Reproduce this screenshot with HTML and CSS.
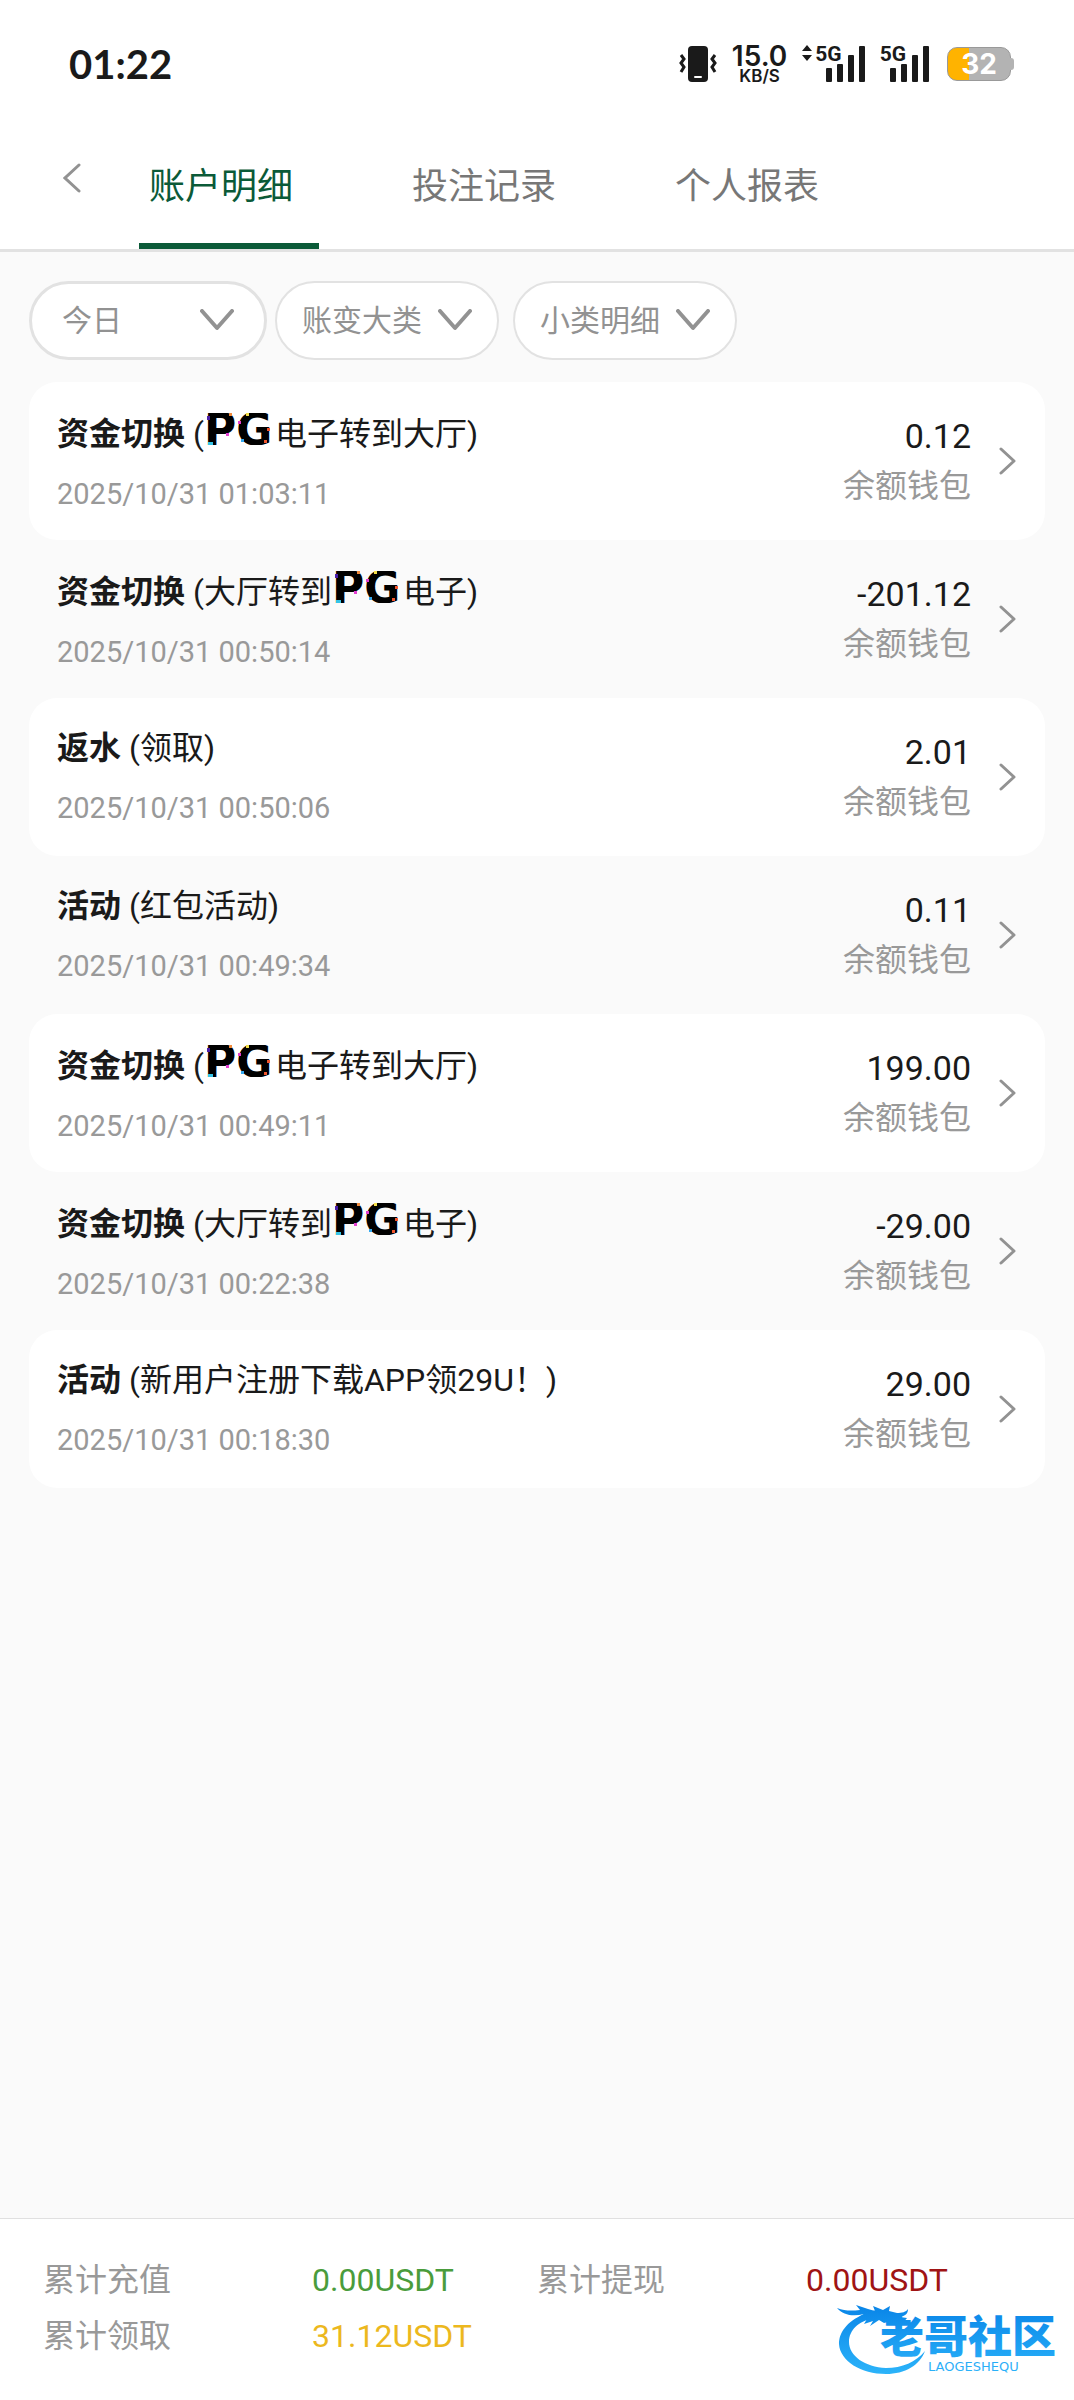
FILE: index.html
```html
<!DOCTYPE html>
<html lang="zh-CN">
<head>
    <meta charset="UTF-8">
    <meta name="viewport" content="width=device-width, initial-scale=1.0">
    <title>账户明细</title>
    <link rel="stylesheet" href="styles.css">
</head>
<body>
    <!-- shared shapes -->
    <svg class="defs" width="0" height="0" aria-hidden="true">
        <symbol id="chevron-down" viewBox="0 0 34 22">
            <path d="M2 2 L17 19 L32 2" fill="none" stroke="#929292" stroke-width="4" stroke-linecap="round" stroke-linejoin="round"/>
        </symbol>
        <symbol id="chevron-right" viewBox="0 0 18 28">
            <path d="M2 2 L15 14 L2 26" fill="none" stroke="#929292" stroke-width="3" stroke-linecap="round" stroke-linejoin="round"/>
        </symbol>
        <symbol id="pg" viewBox="0 0 64 32">
            <text class="pg-text" x="-3" y="32">PG</text>
            <path fill="#4b1fa8" d="M0 3h3v4h-3z"/>
            <path fill="#f08a3c" d="M22 0h3v3h-3z"/>
            <path fill="#35c4e8" d="M1 29h5v3h-5z"/>
            <path fill="#e23fd0" d="M19 20h3v3h-3z"/>
            <path fill="#f5e04a" d="M39 0h3v3h-3z"/>
            <path fill="#e23fd0" d="M31 8h3v3h-3z"/>
            <path fill="#35a9ee" d="M34 26h3v3h-3z"/>
            <path fill="#f0562e" d="M60 15h3v3h-3zM57 27h3v3h-3z"/>
        </symbol>
        <symbol id="signal" viewBox="0 0 40 38">
            <g fill="#1a1a1a">
                <rect x="1" y="23" width="6" height="14" rx="1"/>
                <rect x="12" y="19" width="6" height="18" rx="1"/>
                <rect x="23" y="10" width="6" height="27" rx="1"/>
                <rect x="34" y="1" width="6" height="36" rx="1"/>
            </g>
        </symbol>
    </svg>

    <div class="status-bar">
        <span class="clock">01:22</span>
        <div class="status-icons">
            <svg class="vibrate" width="38" height="38" viewBox="0 0 38 38" aria-hidden="true">
                <rect x="9" y="1" width="20" height="36" rx="4" fill="#1a1a1a"/>
                <rect x="15" y="31" width="8" height="2" rx="1" fill="#fff"/>
                <path d="M2 10 L5 14 L2 18 L5 22 L2 27 M36 10 L33 14 L36 18 L33 22 L36 27" fill="none" stroke="#1a1a1a" stroke-width="3"/>
            </svg>
            <div class="speed"><b>15.0</b><span>KB/S</span></div>
            <div class="network">
                <svg class="arrows" width="10" height="16" viewBox="0 0 10 16" aria-hidden="true">
                    <path d="M5 0 L10 6 H0z M5 16 L10 10 H0z" fill="#1a1a1a"/>
                </svg>
                <span class="net-type">5G</span>
                <svg class="bars" width="40" height="38" aria-hidden="true"><use href="#signal"/></svg>
            </div>
            <div class="network">
                <span class="net-type">5G</span>
                <svg class="bars" width="40" height="38" aria-hidden="true"><use href="#signal"/></svg>
            </div>
            <div class="battery">32</div>
        </div>
    </div>

    <nav class="tabs">
        <button class="back" aria-label="返回">
            <svg width="18" height="30" viewBox="0 0 18 30"><path d="M16 2 L2 15 L16 28" fill="none" stroke="#929292" stroke-width="3" stroke-linecap="round"/></svg>
        </button>
        <a class="tab active" href="#">账户明细</a>
        <a class="tab" href="#">投注记录</a>
        <a class="tab" href="#">个人报表</a>
    </nav>

    <main>
        <div class="filters">
            <div class="filter filter-date">
                <select aria-label="日期"><option>今日</option></select>
                <svg class="arrow" width="34" height="22" aria-hidden="true"><use href="#chevron-down"/></svg>
            </div>
            <div class="filter">
                <select aria-label="账变大类"><option>账变大类</option></select>
                <svg class="arrow" width="34" height="22" aria-hidden="true"><use href="#chevron-down"/></svg>
            </div>
            <div class="filter">
                <select aria-label="小类明细"><option>小类明细</option></select>
                <svg class="arrow" width="34" height="22" aria-hidden="true"><use href="#chevron-down"/></svg>
            </div>
        </div>

        <div class="records">
            <a class="record" href="#">
                <div class="info">
                    <div class="title"><b>资金切换</b> (<svg class="pg" width="64" height="32"><use href="#pg"/></svg>电子转到大厅)</div>
                    <div class="date">2025/10/31 01:03:11</div>
                </div>
                <div class="money">
                    <div class="amount">0.12</div>
                    <div class="wallet">余额钱包</div>
                </div>
                <svg width="18" height="28" aria-hidden="true"><use href="#chevron-right"/></svg>
            </a>
            <a class="record" href="#">
                <div class="info">
                    <div class="title"><b>资金切换</b> (大厅转到<svg class="pg" width="64" height="32"><use href="#pg"/></svg>电子)</div>
                    <div class="date">2025/10/31 00:50:14</div>
                </div>
                <div class="money">
                    <div class="amount">-201.12</div>
                    <div class="wallet">余额钱包</div>
                </div>
                <svg width="18" height="28" aria-hidden="true"><use href="#chevron-right"/></svg>
            </a>
            <a class="record" href="#">
                <div class="info">
                    <div class="title"><b>返水</b> (领取)</div>
                    <div class="date">2025/10/31 00:50:06</div>
                </div>
                <div class="money">
                    <div class="amount">2.01</div>
                    <div class="wallet">余额钱包</div>
                </div>
                <svg width="18" height="28" aria-hidden="true"><use href="#chevron-right"/></svg>
            </a>
            <a class="record" href="#">
                <div class="info">
                    <div class="title"><b>活动</b> (红包活动)</div>
                    <div class="date">2025/10/31 00:49:34</div>
                </div>
                <div class="money">
                    <div class="amount">0.11</div>
                    <div class="wallet">余额钱包</div>
                </div>
                <svg width="18" height="28" aria-hidden="true"><use href="#chevron-right"/></svg>
            </a>
            <a class="record" href="#">
                <div class="info">
                    <div class="title"><b>资金切换</b> (<svg class="pg" width="64" height="32"><use href="#pg"/></svg>电子转到大厅)</div>
                    <div class="date">2025/10/31 00:49:11</div>
                </div>
                <div class="money">
                    <div class="amount">199.00</div>
                    <div class="wallet">余额钱包</div>
                </div>
                <svg width="18" height="28" aria-hidden="true"><use href="#chevron-right"/></svg>
            </a>
            <a class="record" href="#">
                <div class="info">
                    <div class="title"><b>资金切换</b> (大厅转到<svg class="pg" width="64" height="32"><use href="#pg"/></svg>电子)</div>
                    <div class="date">2025/10/31 00:22:38</div>
                </div>
                <div class="money">
                    <div class="amount">-29.00</div>
                    <div class="wallet">余额钱包</div>
                </div>
                <svg width="18" height="28" aria-hidden="true"><use href="#chevron-right"/></svg>
            </a>
            <a class="record" href="#">
                <div class="info">
                    <div class="title"><b>活动</b> (新用户注册下载APP领29U！)</div>
                    <div class="date">2025/10/31 00:18:30</div>
                </div>
                <div class="money">
                    <div class="amount">29.00</div>
                    <div class="wallet">余额钱包</div>
                </div>
                <svg width="18" height="28" aria-hidden="true"><use href="#chevron-right"/></svg>
            </a>
        </div>
    </main>

    <footer class="totals">
        <span>累计充值</span>
        <span class="green">0.00USDT</span>
        <span>累计提现</span>
        <span class="red">0.00USDT</span>
        <span>累计领取</span>
        <span class="yellow">31.12USDT</span>

        <svg class="community" width="224" height="76" viewBox="0 0 224 76">
            <defs>
                <linearGradient id="blue" gradientUnits="userSpaceOnUse" x1="0" y1="4" x2="0" y2="72">
                    <stop offset="0" stop-color="#0a86e8"/>
                    <stop offset="1" stop-color="#2cb4fa"/>
                </linearGradient>
            </defs>
            <g fill="url(#blue)">
                <path d="M28 11 C10 19 3 30 3 41 C4 58 25 71 50 71 C69 71 84 62 89 48 C80 59 66 65 50 65 C29 64 13 53 13 39 C13 27 23 18 36 16 C43 15 49 17 53 19 L48 8 C42 6 34 8 28 11 Z"/>
                <path d="M1 5 C9 8 15 8 24 7 L20 2 L32 6 L39 8 L37 3 L47 7 L54 3 L53 8 L61 10 C66 10 70 9 72 6 C72 11 69 13 64 14 L71 15 C68 20 62 20 56 18 L48 20 L43 17 L34 23 L37 18 L28 21 L31 16 L22 15 L28 11 C17 14 7 12 1 5 Z"/>
                <text class="community-name" x="44" y="50">老哥社区</text>
                <text class="community-sub" x="92" y="68">LAOGESHEQU</text>
            </g>
        </svg>
    </footer>
</body>
</html>
```

FILE: styles.css
```css
* {
    box-sizing: border-box;
}
body {
    font-family: Roboto, 'Noto Sans CJK SC', sans-serif;
    font-weight: 400;
    background-color: #fafafa;
    color: #1a1a1a;
    margin: 0;
    min-height: 100vh;
    display: flex;
    flex-direction: column;
}
a {
    color: inherit;
    text-decoration: none;
}
.defs {
    display: none;
}

/* status bar */
.status-bar {
    display: flex;
    justify-content: space-between;
    align-items: center;
    height: 124px;
    padding: 4px 63px 0 69px;
    background: #fff;
}
.clock {
    font-family: Lato, sans-serif;
    font-weight: 700;
    font-size: 40px;
}
.status-icons {
    display: flex;
    align-items: center;
    gap: 15px;
    font-family: Inter, sans-serif;
}
.speed {
    display: flex;
    flex-direction: column;
    align-items: center;
    font-weight: 600;
}
.speed b {
    font-size: 28px;
    line-height: 24px;
    font-weight: 600;
}
.speed span {
    font-size: 17px;
    line-height: 16px;
}
.network {
    display: flex;
    align-items: flex-start;
}
.arrows {
    margin-right: 3px;
}
.net-type {
    font-family: Roboto, sans-serif;
    font-size: 21px;
    line-height: 18px;
    font-weight: 700;
}
.bars {
    margin-left: -17px;
}
.battery {
    position: relative;
    width: 64px;
    height: 34px;
    margin-left: 3px;
    border: 1px solid #999;
    border-radius: 10px;
    background: linear-gradient(to right, #ffb300 34%, #b3b3b3 34%);
    color: #fff;
    font-size: 28px;
    line-height: 32px;
    font-weight: 700;
    text-align: center;
}
.battery::after {
    content: '';
    position: absolute;
    right: -4px;
    top: 10px;
    width: 4px;
    height: 12px;
    border-radius: 0 3px 3px 0;
    background: #b3b3b3;
}

/* tabs */
.tabs {
    display: flex;
    gap: 83px;
    background: #fff;
    border-bottom: 3px solid #e2e2e2;
}
.back {
    width: 139px;
    margin-right: -83px;
    padding: 0 0 14px 4px;
    border: none;
    background: none;
    cursor: pointer;
}
.tab {
    width: 180px;
    height: 125px;
    padding: 8px 0 0 10px;
    border-bottom: 6px solid transparent;
    font-size: 36px;
    line-height: 111px;
    color: #777;
}
.tab.active {
    color: #0b5a38;
    border-color: #0b5a38;
}

/* filters */
main {
    flex: 1;
    padding: 29px 29px 22px;
}
.filters {
    display: flex;
    gap: 14px;
}
.filter {
    position: relative;
    width: 224px;
}
.filter-date {
    width: 238px;
    margin-right: -6px;
}
.filter select {
    appearance: none;
    width: 100%;
    height: 79px;
    padding: 0 25px;
    border: 2px solid #e2e2e2;
    border-radius: 40px;
    background: #fff;
    color: #929292;
    font-family: inherit;
    font-size: 30px;
}
.filter-date select {
    padding: 0 30px;
    border-width: 3px;
}
.arrow {
    position: absolute;
    right: 27px;
    top: 28px;
    pointer-events: none;
}
.filter-date .arrow {
    right: 33px;
}

/* records */
.records {
    margin-top: 22px;
}
.record {
    display: flex;
    align-items: center;
    gap: 28px;
    height: 158px;
    padding: 0 28px;
    border-radius: 28px;
}
.record:nth-child(odd) {
    background: #fff;
}
.info {
    flex: 1;
    padding-bottom: 4px;
}
.title {
    font-size: 32px;
    line-height: 50px;
}
.title b {
    font-weight: 700;
}
.pg {
    margin: 8px 4px 0 3px;
    vertical-align: baseline;
}
.pg-text {
    font-family: 'DejaVu Sans', sans-serif;
    font-size: 44px;
    font-weight: 700;
    fill: #000;
}
.date {
    margin-top: 15px;
    font-size: 29px;
    line-height: 40px;
    color: #999;
}
.money {
    text-align: right;
    line-height: 50px;
}
.amount {
    font-size: 34px;
}
.wallet {
    font-size: 32px;
    color: #999;
}

/* totals */
.totals {
    position: relative;
    display: grid;
    grid-template-columns: 269fr 225fr 269fr 225fr;
    height: 182px;
    padding: 33px 43px;
    background: #fff;
    border-top: 1px solid #e0e0e0;
    font-size: 32px;
    line-height: 56px;
    align-content: start;
    color: #999;
}
.green {
    color: #4a9c3c;
}
.red {
    color: #a01414;
}
.yellow {
    color: #ecb81e;
}
.community {
    position: absolute;
    right: 14px;
    bottom: 21px;
}
.community-name {
    font-family: 'Noto Sans CJK SC', sans-serif;
    font-size: 44px;
    font-weight: 900;
}
.community-sub {
    font-family: 'DejaVu Sans', sans-serif;
    font-size: 13px;
    font-weight: 400;
}
```
